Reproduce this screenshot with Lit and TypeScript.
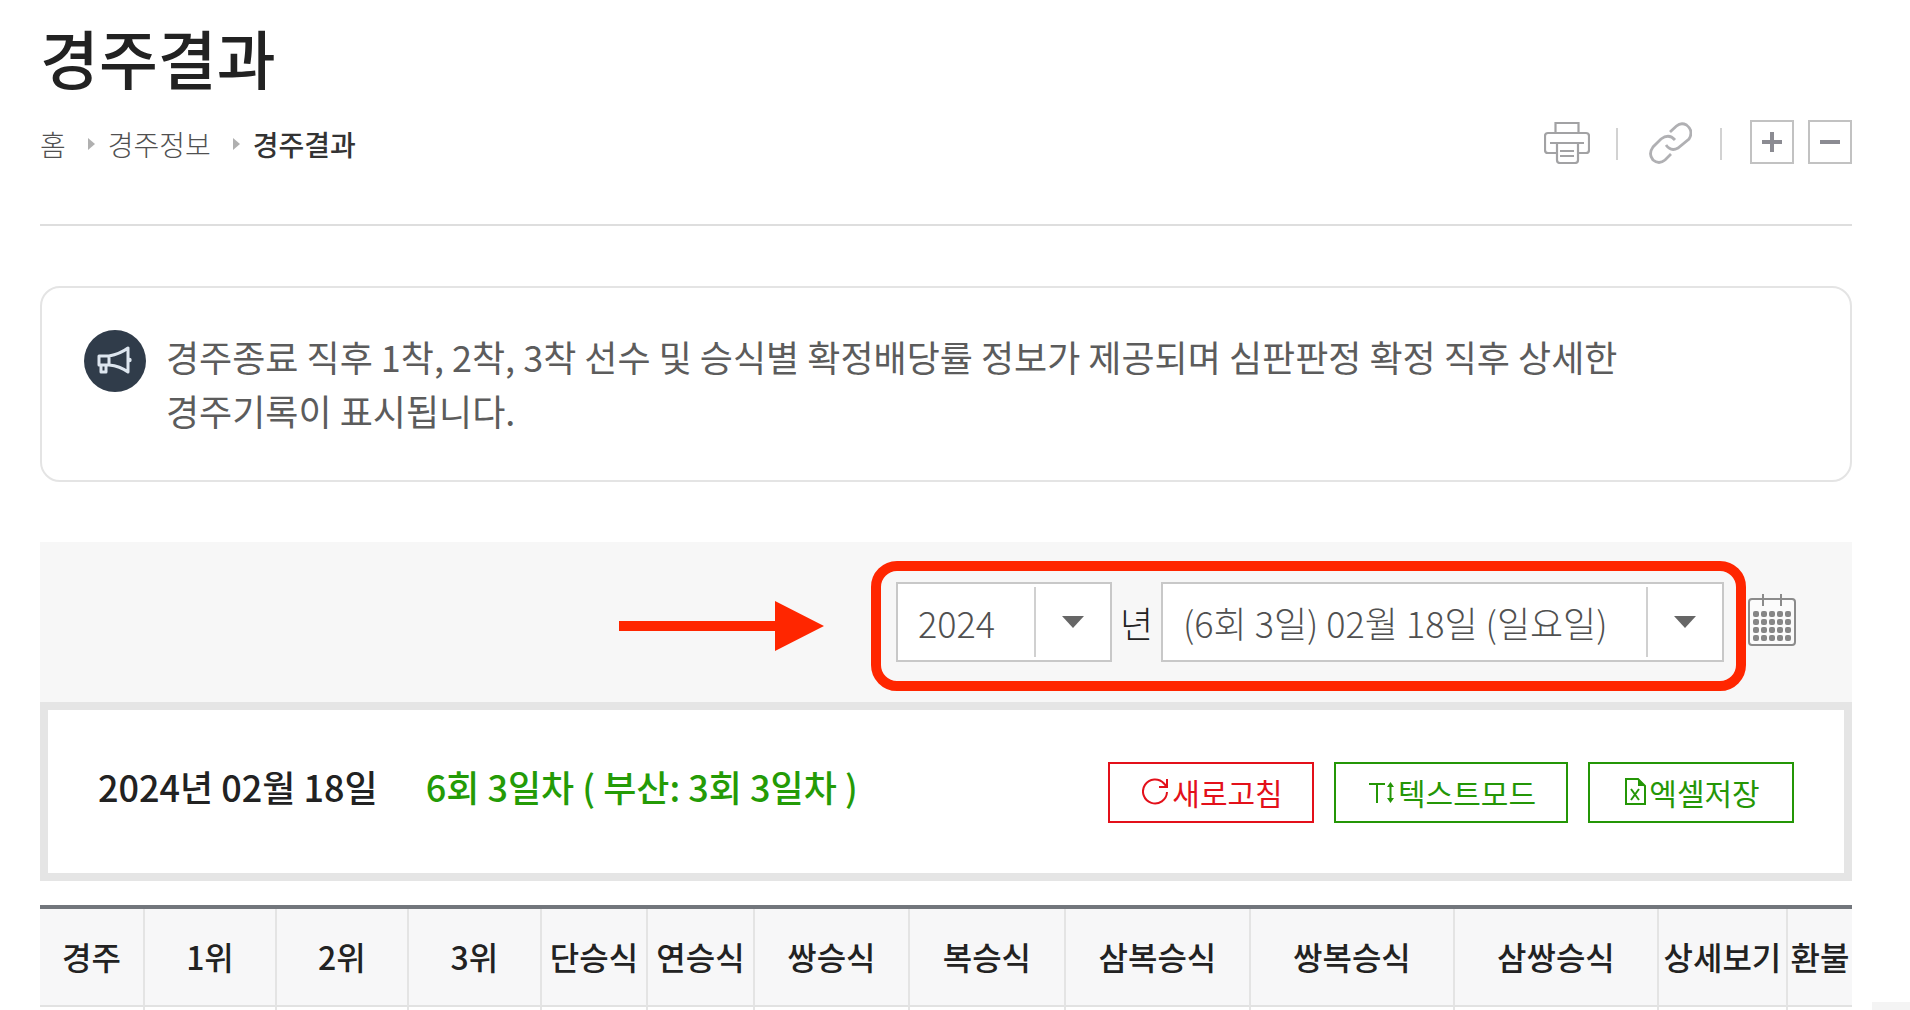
import { LitElement, html, css, svg } from "lit";
import { customElement, state } from "lit/decorators.js";

interface Column {
  label: string;
  width: number;
}

const COLUMNS: Column[] = [
  { label: "경주", width: 103 },
  { label: "1위", width: 132 },
  { label: "2위", width: 132 },
  { label: "3위", width: 133 },
  { label: "단승식", width: 106 },
  { label: "연승식", width: 107 },
  { label: "쌍승식", width: 155 },
  { label: "복승식", width: 156 },
  { label: "삼복승식", width: 185 },
  { label: "쌍복승식", width: 204 },
  { label: "삼쌍승식", width: 204 },
  { label: "상세보기", width: 129 },
  { label: "환불", width: 66 },
];
const TOTAL = COLUMNS.reduce((sum, c) => sum + c.width, 0);

const printerIcon = html`<svg viewBox="0 0 46 42" width="46" height="42" fill="none" stroke="#a2a2a4" stroke-width="2.200" aria-hidden="true">
  <path d="M11.500 10.500V1H34.500V10.500M13 31H4Q1 31 1 28V14Q1 11 4 11H42Q45 11 45 14V28Q45 31 42 31H34M6 21H40M13 21V38Q13 41 16 41H31Q34 41 34 38V21M16 29H30M16 34H30"/>
</svg>`;

const linkIcon = html`<svg viewBox="0 0 43 42" width="43" height="42" fill="none" stroke="#b0b0b3" stroke-width="2.800" aria-hidden="true">
  <path d="M21 10L27.500 4Q32 0 37.500 3Q45 9 40 17L29 26Q22 30 17 23"/>
  <path d="M26 18Q20 11 12 17L4 25Q-1 32 4 38Q10 43 16 38L22 32"/>
</svg>`;

const hornIcon = html`<svg viewBox="0 0 62 62" width="62" height="62" aria-hidden="true">
  <circle cx="31" cy="31" r="31" fill="#303c4a"/>
  <g fill="none" stroke="#dde6ef" stroke-width="3" stroke-linejoin="round">
    <path d="M15 26H25V35H15ZM25 26Q36 24 44 18V42Q36 36 25 35M17 35V42H22V35"/>
  </g>
  <circle cx="45.500" cy="30" r="2.200" fill="#dde6ef"/>
</svg>`;

const dots = [0, 1, 2, 3].flatMap((r) =>
  [0, 1, 2, 3, 4].map((c) => svg`<rect x=${5 + c * 8} y=${17 + r * 8} width="6" height="6" rx="2"/>`)
);
const calendarIcon = html`<svg viewBox="0 0 48 52" width="48" height="52" aria-hidden="true">
  <rect x="1" y="5" width="46" height="46" rx="3" fill="#fbfbfb" stroke="#8b8b8b" stroke-width="2"/>
  <path d="M15 0V12M33 0V12" stroke="#8b8b8b" stroke-width="2"/>
  <g fill="#868686">${dots}</g>
</svg>`;

const refreshIcon = html`<svg viewBox="0 0 27 27" width="27" height="27" fill="none" stroke="currentColor" stroke-width="2" aria-hidden="true">
  <path d="M25 14A12 12 0 1 1 22 5.500L25 9M25 1V9H17"/>
</svg>`;

const textSizeIcon = html`<svg viewBox="0 0 26 22" width="26" height="22" fill="none" stroke="currentColor" stroke-width="2" aria-hidden="true">
  <path d="M0 3H16M8 3V22M21.500 4V20"/>
  <path d="M21.500 1L25 6H18ZM21.500 22L25 17H18Z" fill="currentColor" stroke="none"/>
</svg>`;

const excelIcon = html`<svg viewBox="0 0 21 27" width="21" height="27" fill="none" stroke="currentColor" stroke-width="2" aria-hidden="true">
  <path d="M1 1H13L20 8V26H1ZM6 11L14 22M14 11L6 22"/>
  <path d="M13 1V8H20Z" fill="currentColor" stroke="none"/>
</svg>`;

@customElement("app-root")
export class AppRoot extends LitElement {
  static styles = css`
    :host {
      display: block;
      position: relative;
      min-height: 100vh;
      box-sizing: border-box;
      padding: 16px 58px 0 40px;
      background: #fff;
      color: #222;
      font-family: "Noto Sans CJK KR", sans-serif;
      overflow: hidden;
    }
    * { box-sizing: border-box; }
    svg { display: block; flex: none; }
    button { font-family: inherit; cursor: pointer; }
    h1 { margin: 0; font-size: 64px; line-height: 80px; font-weight: 500; }
    .head {
      display: flex;
      align-items: center;
      justify-content: space-between;
      height: 130px;
      padding: 4px 0 40px;
      border-bottom: 2px solid #dedede;
    }
    .crumbs {
      display: flex;
      align-items: center;
      gap: 12px;
      margin: 4px 0 0;
      padding: 0;
      list-style: none;
      font-size: 28px;
      line-height: 40px;
      font-weight: 300;
    }
    .crumbs li { display: flex; align-items: center; gap: 13px; }
    .crumbs li + li::before {
      content: "";
      margin-left: 10px;
      border: 6px solid transparent;
      border-left: 7px solid #b0b0b0;
      border-right: 0;
    }
    .crumbs a { color: #505050; text-decoration: none; }
    .here { font-weight: 500; color: #333; }
    .tools { display: flex; align-items: center; }
    .tool { display: flex; padding: 0; border: 0; background: none; }
    .tools .tool { margin-top: 2px; }
    .tools .link { padding: 0 2px 0 3px; }
    .sep { width: 2px; height: 32px; margin: 4px 28px 0 26px; background: #d2d2d2; }
    .size {
      display: flex;
      align-items: center;
      justify-content: center;
      width: 44px;
      height: 44px;
      padding: 0;
      border: 2px solid #c2c2c2;
      background: #fff;
    }
    .size + .size { margin-left: 14px; }
    .notice {
      display: flex;
      gap: 20px;
      margin-top: 60px;
      padding: 42px;
      border: 2px solid #e4e4e4;
      border-radius: 20px;
    }
    .notice p {
      max-width: 1500px;
      margin: -1px 0 1px;
      font-size: 36px;
      line-height: 54px;
      color: #5c5c5c;
      word-break: keep-all;
    }
    .filter {
      display: flex;
      align-items: center;
      justify-content: flex-end;
      height: 160px;
      margin-top: 60px;
      padding-right: 56px;
      background: #f7f7f7;
    }
    .mark { margin: 8px 47px 0 0; }
    .picks {
      display: flex;
      align-items: center;
      height: 130px;
      margin: 8px 2px 0 0;
      padding: 0 12px 8px 15px;
      border: 10px solid #ff2600;
      border-radius: 26px;
    }
    .picks label { display: flex; align-items: center; }
    .unit { width: 49px; text-align: center; font-size: 36px; line-height: 54px; font-weight: 300; }
    .box { display: flex; position: relative; }
    .box select {
      appearance: none;
      width: 216px;
      height: 80px;
      padding: 0 77px 0 20px;
      border: 2px solid #c8c8c8;
      border-radius: 0;
      background: #fff;
      color: #505050;
      font-family: inherit;
      font-size: 36px;
      font-weight: 300;
    }
    .box .wide { width: 563px; }
    .drop {
      position: absolute;
      top: 5px;
      right: 2px;
      width: 76px;
      height: 70px;
      display: flex;
      align-items: center;
      justify-content: center;
      border-left: 2px solid #d0d0d0;
      pointer-events: none;
    }
    .calendar { padding-bottom: 4px; }
    .day {
      display: flex;
      align-items: flex-start;
      justify-content: space-between;
      height: 179px;
      padding: 52px 50px 0;
      border: 8px solid #e5e5e5;
    }
    .round {
      display: flex;
      gap: 48px;
      margin: 0;
      font-size: 36px;
      line-height: 48px;
      font-weight: 500;
    }
    .green { color: #249b06; }
    .actions { display: flex; gap: 20px; }
    .act {
      display: flex;
      align-items: center;
      justify-content: center;
      gap: 3px;
      width: 206px;
      height: 61px;
      padding: 0 0 2px 3px;
      border: 2px solid currentColor;
      background: #fff;
      color: #249606;
      font-size: 30px;
      line-height: 44px;
      font-weight: 400;
    }
    .act.text { width: 234px; }
    .act.reload { color: #e3101a; }
    table {
      width: 100%;
      margin-top: 24px;
      border-collapse: separate;
      border-spacing: 0;
      table-layout: fixed;
      border-top: 4px solid #72767c;
    }
    th {
      height: 98px;
      padding: 0 0 2px;
      border-bottom: 2px solid #e2e2e2;
      background: #f7f7f8;
      font-size: 32px;
      line-height: 48px;
      font-weight: 500;
      white-space: nowrap;
    }
    td { height: 3px; padding: 0; }
    th + th, td + td { border-left: 2px solid #e4e4e4; }
    .corner {
      position: absolute;
      right: 0;
      bottom: 0;
      width: 38px;
      height: 8px;
      background: #f4f4f4;
    }
  `;

  @state() private year = "2024";

  private caret() {
    return html`<span class="drop"><svg viewBox="0 0 22 12" width="22" height="12" aria-hidden="true"><path d="M0 0H22L11 12Z" fill="#666"/></svg></span>`;
  }

  render() {
    return html`
      <h1>경주결과</h1>
      <div class="head">
        <nav aria-label="위치">
          <ol class="crumbs">
            <li><a href="#home">홈</a></li>
            <li><a href="#info">경주정보</a></li>
            <li><span class="here">경주결과</span></li>
          </ol>
        </nav>
        <div class="tools">
          <button class="tool" aria-label="인쇄">${printerIcon}</button>
          <span class="sep"></span>
          <button class="tool link" aria-label="링크 복사">${linkIcon}</button>
          <span class="sep"></span>
          <button class="size" aria-label="확대"><svg viewBox="0 0 20 20" width="20" height="20" stroke="#8b8b92" stroke-width="4" aria-hidden="true"><path d="M0 10H20M10 0V20"/></svg></button>
          <button class="size" aria-label="축소"><svg viewBox="0 0 20 20" width="20" height="20" stroke="#8b8b92" stroke-width="4" aria-hidden="true"><path d="M0 10H20"/></svg></button>
        </div>
      </div>

      <section class="notice">
        ${hornIcon}
        <p>경주종료 직후 1착, 2착, 3착 선수 및 승식별 확정배당률 정보가 제공되며 심판판정 확정 직후 상세한 경주기록이 표시됩니다.</p>
      </section>

      <div class="filter">
        <svg class="mark" viewBox="0 0 205 50" width="205" height="50" fill="#ff2600" aria-hidden="true"><path d="M0 20H156V0L205 25L156 50V30H0Z"/></svg>
        <div class="picks">
          <label>
            <span class="box">
              <select .value=${this.year} @change=${(e: Event) => (this.year = (e.target as HTMLSelectElement).value)}>
                <option>2024</option>
              </select>
              ${this.caret()}
            </span>
            <span class="unit">년</span>
          </label>
          <span class="box">
            <select class="wide" aria-label="경주일">
              <option>(6회 3일) 02월 18일 (일요일)</option>
            </select>
            ${this.caret()}
          </span>
        </div>
        <button class="tool calendar" aria-label="달력">${calendarIcon}</button>
      </div>

      <div class="day">
        <p class="round"><span>2024년 02월 18일</span><span class="green">6회 3일차 ( 부산: 3회 3일차 )</span></p>
        <div class="actions">
          <button class="act reload">${refreshIcon}<span>새로고침</span></button>
          <button class="act text">${textSizeIcon}<span>텍스트모드</span></button>
          <button class="act">${excelIcon}<span>엑셀저장</span></button>
        </div>
      </div>

      <table>
        <colgroup>${COLUMNS.map((c) => html`<col style="width:${(c.width / TOTAL) * 100}%" />`)}</colgroup>
        <thead><tr>${COLUMNS.map((c) => html`<th scope="col">${c.label}</th>`)}</tr></thead>
        <tbody><tr>${COLUMNS.map(() => html`<td></td>`)}</tr></tbody>
      </table>
      <div class="corner"></div>
    `;
  }
}
